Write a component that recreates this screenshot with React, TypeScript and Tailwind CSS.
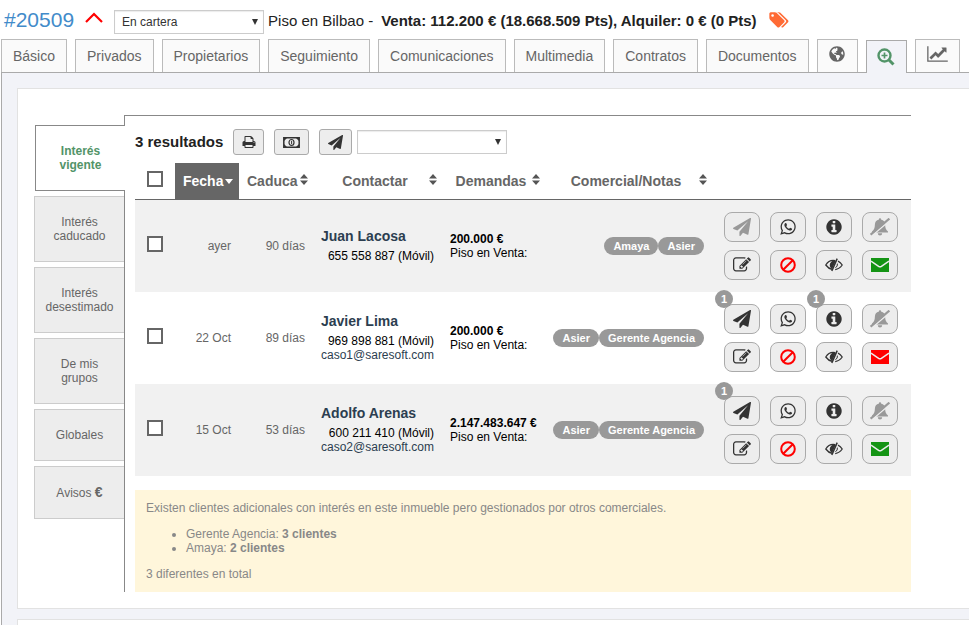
import type { ReactNode } from "react";
import { FaGlobeAmericas } from "react-icons/fa";

const PATHS = {
  plane:
    "M1764 11q33 24 27 64l-256 1536q-5 29-32 45-14 8-31 8-11 0-24-5l-453-185-242 295q-18 23-49 23-13 0-22-4-19-7-30.5-23.5t-11.5-36.5v-349l864-1059-1069 925-395-162q-37-14-40-55-2-40 32-59l1664-960q15-9 32-9 20 0 36 11z",
  whatsapp:
    "M1113 974q13 0 97.5 44t89.5 53q2 5 2 15 0 33-17 76-16 39-71 65.5t-102 26.5q-57 0-190-62-98-45-170-118t-148-185q-72-107-71-194v-8q3-91 74-158 24-22 52-22 6 0 18 1.5t19 1.5q19 0 26.5 6.5t15.5 27.5q8 20 33 88t25 75q0 21-34.5 57.5t-34.5 46.5q0 7 5 15 34 73 102 137 56 53 151 101 12 7 22 7 15 0 54-48.5t52-48.5zm-203 530q127 0 243.5-50t200.5-134 134-200.5 50-243.5-50-243.5-134-200.5-200.5-134-243.5-50-243.5 50-200.5 134-134 200.5-50 243.5q0 203 120 368l-79 233 242-77q158 104 345 104zm0-1382q153 0 292.5 60t240.5 161 161 240.5 60 292.5-60 292.5-161 240.5-240.5 161-292.5 60q-195 0-365-94l-417 134 136-405q-108-178-108-389 0-153 60-292.5t161-240.5 240.5-161 292.5-60z",
  print:
    "M448 1536h896v-256h-896v256zm0-640h896v-384h-160q-40 0-68-28t-28-68v-160h-640v640zm1152 64q0-26-19-45t-45-19-45 19-19 45 19 45 45 19 45-19 19-45zm128 0v416q0 13-9.5 22.5t-22.5 9.5h-224v160q0 40-28 68t-68 28h-960q-40 0-68-28t-28-68v-160h-224q-13 0-22.5-9.5t-9.5-22.5v-416q0-79 56.5-135.5t135.5-56.5h64v-544q0-40 28-68t68-28h672q40 0 88 20t76 48l152 152q28 28 48 76t20 88v256h64q79 0 135.5 56.5t56.5 135.5z",
  edit: "M888 1184l116-116-152-152-116 116v56h96v96h56zm440-720q-16-16-33 1l-350 350q-17 17-1 33t33-1l350-350q17-17 1-33zm80 594v190q0 119-84.5 203.5t-203.5 84.5h-832q-119 0-203.5-84.5t-84.5-203.5v-832q0-119 84.5-203.5t203.5-84.5h832q63 0 117 25 15 7 18 23 3 17-9 29l-49 49q-14 14-32 8-23-6-45-6h-832q-66 0-113 47t-47 113v832q0 66 47 113t113 47h832q66 0 113-47t47-113v-126q0-13 9-22l64-64q15-15 35-7t20 29zm-96-738l288 288-672 672h-288v-288zm444 132l-92 92-288-288 92-92q28-28 68-28t68 28l152 152q28 28 28 68t-28 68z",
  info: "M1152 1376v-160q0-14-9-23t-23-9h-96v-512q0-14-9-23t-23-9h-320q-14 0-23 9t-9 23v160q0 14 9 23t23 9h96v320h-96q-14 0-23 9t-9 23v160q0 14 9 23t23 9h448q14 0 23-9t9-23zm-128-896v-160q0-14-9-23t-23-9h-192q-14 0-23 9t-9 23v160q0 14 9 23t23 9h192q14 0 23-9t9-23zm640 416q0 209-103 385.5t-279.5 279.5-385.5 103-385.5-103-279.5-279.5-103-385.5 103-385.5 279.5-279.5 385.5-103 385.5 103 279.5 279.5 103 385.5z",
  chart:
    "M2048 1536v128h-2048v-1536h128v1408h1920zm-128-1248v435q0 21-19.5 29.5t-35.5-7.5l-121-121-633 633q-10 10-23 10t-23-10l-233-233-416 416-192-192 585-585q10-10 23-10t23 10l233 233 464-464-121-121q-16-16-7.5-35.5t29.5-19.5h435q14 0 23 9t9 23z",
  tags: "M448 448q0-53-37.5-90.5t-90.5-37.5-90.5 37.5-37.5 90.5 37.5 90.5 90.5 37.5 90.5-37.5 37.5-90.5zm1067 576q0 53-37 90l-491 492q-39 37-91 37-53 0-90-37l-715-716q-38-37-64.5-101t-26.5-117v-416q0-52 38-90t90-38h416q53 0 117 26.5t102 64.5l715 714q37 39 37 91zm384 0q0 53-37 90l-491 492q-39 37-91 37-36 0-59-14t-53-45l470-470q37-37 37-90 0-52-37-91l-715-714q-38-38-102-64.5t-117-26.5h224q53 0 117 26.5t102 64.5l715 714q37 39 37 91z",
};

function Glyph({ name, box = "0 0 1792 1792", className }: { name: keyof typeof PATHS; box?: string; className: string }) {
  return (
    <svg viewBox={box} fill="currentColor" className={className} aria-hidden="true">
      <path d={PATHS[name]} />
    </svg>
  );
}

function BanIcon() {
  return (
    <svg viewBox="0 0 16 16" className="h-4 w-4" fill="none" stroke="#f00" strokeWidth="2" aria-hidden="true">
      <circle cx="8" cy="8" r="6.8" />
      <path d="M12.8 3.2 3.2 12.8" />
    </svg>
  );
}

function EyeIcon() {
  return (
    <svg viewBox="0 0 18 14" className="h-3.5 w-[18px]" fill="none" stroke="#333" aria-hidden="true">
      <path d="M10.2 2.6A9 9 0 0 0 .8 7q2.6 3.6 6.2 4.3" strokeWidth="1.3" />
      <path d="M13 3.2Q15.6 4.4 17.2 7q-2.8 4-7 4.6" strokeWidth="1.3" />
      <path d="M9.6 3.4A3.7 3.7 0 0 0 6.8 9.800z" fill="#333" strokeWidth="1.6" />
      <path d="M12.4 5.6q.4 2.7-1.9 4.2" strokeWidth="1" />
      <path d="M12.2.6 6.8 13" strokeWidth="1.5" />
    </svg>
  );
}

function BellOffIcon() {
  return (
    <svg viewBox="0 0 20 18" className="h-[18px] w-5" aria-hidden="true">
      <path
        d="M10 .2c.7 0 1.1.5 1 1.2 2.8.6 4 2.6 4.1 5 .1 3.600.9 5.3 2.9 7.1v1H2v-1c2-1.8 2.8-3.5 2.9-7.100.1-2.400 1.3-4.400 4.100-5-.1-.7.300-1.200 1-1.200zM7.800 15.200h4.400a2.200 2.200 0 0 1-4.400 0z"
        fill="#999"
      />
      <path d="M20 2.300 1.500 18" stroke="#ededed" strokeWidth="1.500" />
      <path d="M19.400.6.600 16.600" stroke="#999" strokeWidth="2.200" />
    </svg>
  );
}

function MailIcon({ className }: { className: string }) {
  return (
    <svg viewBox="0 0 18 14" className={className} aria-hidden="true">
      <path d="M0 0h18v14H0z" fill="currentColor" />
      <path d="M0 3.2 7.6 8.4q1.4.9 2.8 0L18 3.2" fill="none" stroke="#ededed" strokeWidth="1.5" />
    </svg>
  );
}

function BillIcon() {
  return (
    <svg viewBox="0 0 17 11" className="h-[11px] w-[17px]" aria-hidden="true">
      <path d="M.8.8h15.4v9.4H.8z" fill="none" stroke="#333" strokeWidth="1.5" />
      <path d="M1 1h3L1 4zM16 1h-3l3 3zM1 10h3L1 7zM16 10h-3l3-3z" fill="#333" />
      <ellipse cx="8.5" cy="5.5" rx="2.5" ry="3" fill="none" stroke="#333" strokeWidth="1.2" />
      <path d="M8.6 3.8v3.4" stroke="#333" />
    </svg>
  );
}

function ZoomInIcon() {
  return (
    <svg viewBox="0 0 18 18" className="h-[18px] w-[18px]" fill="none" stroke="#529468" aria-hidden="true">
      <circle cx="7.5" cy="7.5" r="6" strokeWidth="2.4" />
      <path d="M12 12l4.5 4.5" strokeWidth="3" />
      <path d="M7.5 4.5v6M4.5 7.5h6" strokeWidth="1.7" />
    </svg>
  );
}

function SortIcon() {
  return (
    <svg viewBox="0 0 8 11" className="mb-1 h-[11px] w-2 shrink-0" fill="#555" aria-hidden="true">
      <path d="M4 0l4 4.5H0zM0 6.5h8L4 11z" />
    </svg>
  );
}

function Picker({ label, options }: { label: string; options: string[] }) {
  return (
    <div className="relative shrink-0">
      <select
        aria-label={label}
        className="block h-6 w-[150px] appearance-none border border-[#ccc] bg-white pl-[7px] text-xs leading-[22px] text-[#333] shadow-[inset_0_1px_1px_rgba(0,0,0,0.08)]"
      >
        {options.map((o) => (
          <option key={o}>{o}</option>
        ))}
      </select>
      <svg viewBox="0 0 6 6" className="pointer-events-none absolute top-[9px] right-1.5 h-1.5 w-1.5" fill="#333" aria-hidden="true">
        <path d="M0 0h6L3 6z" />
      </svg>
    </div>
  );
}

const TABS = ["Básico", "Privados", "Propietarios", "Seguimiento", "Comunicaciones", "Multimedia", "Contratos", "Documentos"];

const tabStyle = "flex h-[33px] items-center justify-center border border-b-0 border-[#bbb] bg-[#fafafa] text-sm text-[#666]";

const sideStyle = "border border-r-0 border-[#ccc] bg-[#ededed] px-2 py-[18px] text-xs leading-[14px] text-[#666]";

const toolStyle = "flex h-[26px] items-center justify-center rounded-[3px] border border-[#aaa] bg-[#ededed] text-[#333]";

function Action({ label, badge, children }: { label: string; badge?: number; children: ReactNode }) {
  return (
    <button
      type="button"
      aria-label={label}
      className="relative flex h-[30px] w-9 items-center justify-center rounded-lg border border-[#aaa] bg-[#ededed] text-[#333]"
    >
      {children}
      {badge && (
        <span className="absolute -top-[15px] -left-2.5 h-[18px] w-[18px] rounded-full bg-[#999] text-center text-[11px] leading-[18px] font-bold text-white">
          {badge}
        </span>
      )}
    </button>
  );
}

type Client = {
  date: string;
  days: string;
  name: string;
  phone: string;
  email?: string;
  price: string;
  agents: string[];
  sent?: number;
  notes?: number;
  mail: "ok" | "error";
};

const CLIENTS: Client[] = [
  { date: "ayer", days: "90 días", name: "Juan Lacosa", phone: "655 558 887 (Móvil)", price: "200.000 €", agents: ["Amaya", "Asier"], mail: "ok" },
  {
    date: "22 Oct",
    days: "89 días",
    name: "Javier Lima",
    phone: "969 898 881 (Móvil)",
    email: "caso1@saresoft.com",
    price: "200.000 €",
    agents: ["Asier", "Gerente Agencia"],
    sent: 1,
    notes: 1,
    mail: "error",
  },
  {
    date: "15 Oct",
    days: "53 días",
    name: "Adolfo Arenas",
    phone: "600 211 410 (Móvil)",
    email: "caso2@saresoft.com",
    price: "2.147.483.647 €",
    agents: ["Asier", "Gerente Agencia"],
    sent: 1,
    mail: "ok",
  },
];

const checkStyle = "block h-4 w-4 appearance-none border-2 border-[#666] bg-white checked:bg-[#666]";

const headStyle = "border-b border-[#666]";

function ClientRow({ c }: { c: Client }) {
  return (
    <tr className="h-[92px] odd:bg-[#f1f1f1]">
      <td className="pb-1 pl-3">
        <input type="checkbox" aria-label={`Seleccionar ${c.name}`} className={checkStyle} />
      </td>
      <td className="pr-2 text-right">{c.date}</td>
      <td className="pr-2 text-right">{c.days}</td>
      <td className="px-2 pb-0.5 whitespace-nowrap text-black">
        <a href="#cliente" className="mb-1 block text-sm leading-[18px] font-bold text-[#2c3e50]">
          {c.name}
        </a>
        <div className="text-right">{c.phone}</div>
        {c.email && (
          <a href={`mailto:${c.email}`} className="block text-[#2c3e50]">
            {c.email}
          </a>
        )}
      </td>
      <td className="pl-2 whitespace-nowrap text-black">
        <strong>{c.price}</strong>
        <div>Piso en Venta:</div>
      </td>
      <td className="pr-2">
        <div className="flex justify-end">
          {c.agents.map((a) => (
            <span key={a} className="rounded-full bg-[#999] px-[9px] text-[11px] leading-[18px] font-bold whitespace-nowrap text-white">
              {a}
            </span>
          ))}
        </div>
      </td>
      <td className="pl-3">
        <div className="flex w-[174px] flex-wrap gap-x-2.5 gap-y-2">
          <Action label="Enviar" badge={c.sent}>
            <Glyph name="plane" className={c.sent ? "h-[18px] w-[18px]" : "h-[18px] w-[18px] text-[#999]"} />
          </Action>
          <Action label="WhatsApp">
            <Glyph name="whatsapp" className="h-[18px] w-[18px]" />
          </Action>
          <Action label="Información" badge={c.notes}>
            <Glyph name="info" className="h-[18px] w-[18px]" />
          </Action>
          <Action label="Sin avisos">
            <BellOffIcon />
          </Action>
          <Action label="Editar">
            <Glyph name="edit" className="h-[18px] w-[18px]" />
          </Action>
          <Action label="Descartar">
            <BanIcon />
          </Action>
          <Action label="Ocultar">
            <EyeIcon />
          </Action>
          <Action label="Correo">
            <MailIcon className={c.mail === "ok" ? "h-3.5 w-[18px] text-[#149414]" : "h-3.5 w-[18px] text-[#f00]"} />
          </Action>
        </div>
      </td>
    </tr>
  );
}

export default function App() {
  return (
    <div className="flex min-h-screen flex-col bg-white font-['Liberation_Sans',Arial,sans-serif] text-[#222]">
      <header className="flex h-[39px] items-center pt-1 pl-1 whitespace-nowrap">
        <h1 className="mb-1 text-[21px] leading-6 text-[#428bca]">#20509</h1>
        <button type="button" aria-label="Subir" className="mr-[11px] mb-2 ml-[11px]">
          <svg viewBox="0 0 18 11" className="h-[11px] w-[18px]" fill="none" stroke="#f00" strokeWidth="2.2" aria-hidden="true">
            <path d="M1 10 9 2l8 8" />
          </svg>
        </button>
        <Picker label="Estado" options={["En cartera"]} />
        <span className="mb-0.5 ml-1 text-[15px] leading-5">Piso en Bilbao -</span>
        <strong className="mb-0.5 ml-2 text-[15px] leading-5">Venta: 112.200 € (18.668.509 Pts), Alquiler: 0 € (0 Pts)</strong>
        <Glyph name="tags" box="0 0 1920 1792" className="mb-1 ml-3 h-[18px] w-5 shrink-0 text-[#ff6b35]" />
      </header>

      <nav className="flex items-end gap-2 pl-px">
        {TABS.map((t) => (
          <button key={t} type="button" className={`${tabStyle} px-[11px]`}>
            {t}
          </button>
        ))}
        <button type="button" aria-label="Web" className={`${tabStyle} w-[41px]`}>
          <FaGlobeAmericas className="mb-1 h-4 w-4" />
        </button>
        <button
          type="button"
          aria-label="Interesados"
          className="relative -mb-px flex h-[33px] w-[41px] items-center justify-center border border-b-0 border-[#aaa] bg-[#f2f3f8]"
        >
          <ZoomInIcon />
        </button>
        <button type="button" aria-label="Estadísticas" className={`${tabStyle} w-[45px]`}>
          <Glyph name="chart" box="0 0 2048 1792" className="mb-1 h-[18px] w-[21px]" />
        </button>
      </nav>

      <main className="ml-px flex flex-1 flex-col gap-2.5 border-t border-l border-[#aaa] bg-[#f2f3f8] pt-[15px] pl-[15px]">
        <section className="flex border border-r-0 border-[#e2e2e2] bg-white pt-[26px] pr-[58px] pb-4 pl-4">
          <div className="z-10 mt-2.5 flex w-[91px] shrink-0 flex-col gap-[5px]">
            <button
              type="button"
              className="ml-px border border-r-0 border-[#888] bg-white px-5 py-[18px] text-xs leading-[14px] font-bold text-[#529468]"
            >
              Interés vigente
            </button>
            <button type="button" className={`${sideStyle} mr-px`}>
              Interés caducado
            </button>
            <button type="button" className={`${sideStyle} mr-px`}>
              Interés desestimado
            </button>
            <button type="button" className={`${sideStyle} mr-px`}>
              De mis
              <br />
              grupos
            </button>
            <button type="button" className={`${sideStyle} mr-px`}>
              Globales
            </button>
            <button type="button" className={`${sideStyle} mr-px`}>
              Avisos <span className="text-sm leading-[14px] font-bold">€</span>
            </button>
          </div>

          <div className="-ml-px min-w-0 flex-1 border-t border-l border-[#888] pt-[13px] pl-2.5">
            <div className="mb-2 flex h-[26px] items-center">
              <h2 className="mr-2.5 text-[15px] leading-5 font-bold">3 resultados</h2>
              <button type="button" aria-label="Imprimir" className={`${toolStyle} mr-2.5 w-[31px]`}>
                <Glyph name="print" className="h-3.5 w-3.5" />
              </button>
              <button type="button" aria-label="Precio" className={`${toolStyle} mr-2.5 w-[35px]`}>
                <BillIcon />
              </button>
              <button type="button" aria-label="Enviar selección" className={`${toolStyle} mr-[5px] w-[33px]`}>
                <Glyph name="plane" className="h-[15px] w-[15px]" />
              </button>
              <Picker label="Acción" options={[""]} />
            </div>

            <table className="w-full table-fixed border-separate border-spacing-0 text-xs leading-[14px] text-[#666]">
              <colgroup>
                <col className="w-10" />
                <col className="w-16" />
                <col className="w-[74px]" />
                <col className="w-[129px]" />
                <col className="w-[103px]" />
                <col />
                <col className="w-[199px]" />
              </colgroup>
              <thead className="text-sm">
                <tr className="h-[37px]">
                  <th className={`${headStyle} pb-1 pl-3`}>
                    <input type="checkbox" aria-label="Seleccionar todos" className={checkStyle} />
                  </th>
                  <th className={`${headStyle} bg-[#666] pl-2 text-white`}>
                    <button type="button" className="flex items-center gap-0.5">
                      Fecha
                      <svg viewBox="0 0 8 5" className="h-[5px] w-2" fill="#fff" aria-hidden="true">
                        <path d="M0 0h8L4 5z" />
                      </svg>
                    </button>
                  </th>
                  <th className={`${headStyle} pl-2`}>
                    <button type="button" className="flex items-center gap-0.5">
                      Caduca
                      <SortIcon />
                    </button>
                  </th>
                  <th className={`${headStyle} pr-[5px] pl-2`}>
                    <button type="button" className="flex w-full items-center">
                      <span className="flex-1">Contactar</span>
                      <SortIcon />
                    </button>
                  </th>
                  <th className={`${headStyle} pr-[5px] pl-2`}>
                    <button type="button" className="flex w-full items-center">
                      <span className="flex-1">Demandas</span>
                      <SortIcon />
                    </button>
                  </th>
                  <th className={`${headStyle} pr-[5px] pl-2`}>
                    <button type="button" className="flex w-full items-center">
                      <span className="flex-1">Comercial/Notas</span>
                      <SortIcon />
                    </button>
                  </th>
                  <th className={headStyle} />
                </tr>
              </thead>
              <tbody>
                {CLIENTS.map((c) => (
                  <ClientRow key={c.name} c={c} />
                ))}
              </tbody>
            </table>

            <div className="mt-3.5 bg-[#fff6db] p-[11px] text-xs leading-[14px] text-[#888]">
              <p>Existen clientes adicionales con interés en este inmueble pero gestionados por otros comerciales.</p>
              <ul className="my-3 list-disc pl-10">
                <li>
                  Gerente Agencia: <strong>3 clientes</strong>
                </li>
                <li>
                  Amaya: <strong>2 clientes</strong>
                </li>
              </ul>
              <p>3 diferentes en total</p>
            </div>
          </div>
        </section>
        <section className="flex-1 border-t border-l border-[#e2e2e2] bg-white" />
      </main>
    </div>
  );
}
